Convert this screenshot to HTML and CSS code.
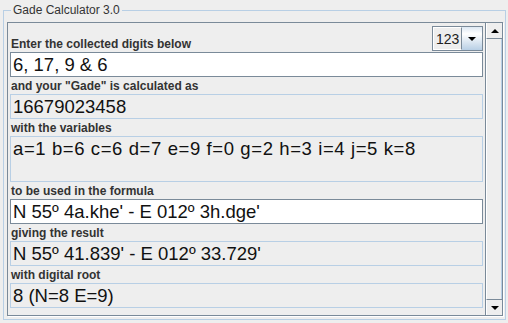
FILE: index.html
```html
<!DOCTYPE html>
<html lang="en">
<head>
    <meta charset="UTF-8">
    <title>Gade Calculator 3.0</title>
    <link rel="stylesheet" href="styles.css">
</head>
<body>
    <fieldset class="group">
        <legend>Gade Calculator 3.0</legend>
        <div class="scroll-pane">
            <div class="viewport">
                <div class="head-row">
                    <span class="label">Enter the collected digits below</span>
                    <div class="combo">
                        <span class="combo-value">123</span>
                        <span class="combo-arrow"><span class="tri-down"></span></span>
                    </div>
                </div>
                <div class="field editable">6, 17, 9 &amp; 6</div>

                <div class="label">and your "Gade" is calculated as</div>
                <div class="field">16679023458</div>

                <div class="label">with the variables</div>
                <div class="field area">a=1 b=6 c=6 d=7 e=9 f=0 g=2 h=3 i=4 j=5 k=8</div>

                <div class="label">to be used in the formula</div>
                <div class="field editable">N 55º 4a.khe' - E 012º 3h.dge'</div>

                <div class="label">giving the result</div>
                <div class="field">N 55º 41.839' - E 012º 33.729'</div>

                <div class="label">with digital root</div>
                <div class="field">8 (N=8 E=9)</div>
            </div>
            <!-- vertical scrollbar, no thumb since everything fits -->
            <div class="vbar">
                <div class="vbar-btn"><span class="tri-up"></span></div>
                <div class="vbar-track"></div>
                <div class="vbar-btn bottom"><span class="tri-down"></span></div>
            </div>
        </div>
    </fieldset>
</body>
</html>
```

FILE: styles.css
```css
body {
    margin: 0;
    padding: 3px 2px 0 3px;
    background-color: #eeeeee;
    font-family: "Liberation Sans", Arial, sans-serif;
    color: #333333;
}

.group {
    box-sizing: border-box;
    height: 317px;
    margin: 0;
    padding: 0 2px 4px 3px;
    border: 1px solid #b8cfe5;
    min-width: 0;
}

.group legend {
    margin-left: 4px;
    padding: 0 2px;
    font-size: 12px;
    line-height: 15px;
    color: #333333;
}

.scroll-pane {
    display: flex;
    height: 292px;
    margin-top: 4px;
    border: 1px solid #7a8a99;
    box-shadow: 1px 1px 0 #ffffff;
}

.viewport {
    flex: 1;
    padding: 3px 2px 0 2px;
}

.head-row {
    display: flex;
    justify-content: space-between;
    align-items: flex-end;
    height: 26px;
}

.label {
    display: block;
    height: 17px;
    line-height: 18px;
    font-size: 12px;
    font-weight: bold;
    padding-left: 1px;
    white-space: nowrap;
}

.head-row .label {
    height: auto;
    line-height: 15px;
}

.combo {
    display: flex;
    box-sizing: border-box;
    width: 51px;
    height: 25px;
    border: 1px solid #7a8a99;
    margin-bottom: 1px;
}

.combo-value {
    flex: 1;
    font-size: 14px;
    line-height: 23px;
    padding-left: 2px;
    color: #222222;
    background: #eeeeee;
    border: 1px solid #ffffff;
    border-right: 1px solid #7a8a99;
}

.combo-arrow {
    display: flex;
    align-items: center;
    justify-content: center;
    width: 20px;
    background: linear-gradient(#dde8f3, #ffffff 30%, #b8cfe5);
}

.tri-down, .tri-up {
    width: 0;
    height: 0;
    border-left: 4px solid transparent;
    border-right: 4px solid transparent;
}

.tri-down {
    border-top: 4px solid #000000;
}

.tri-up {
    border-bottom: 4px solid #000000;
}

.field {
    box-sizing: border-box;
    height: 25px;
    padding-left: 2px;
    border: 1px solid #b8cfe5;
    font-size: 18.5px;
    line-height: 23px;
    color: #111111;
    white-space: nowrap;
}

.field.editable {
    background: #ffffff;
    border-color: #7a8a99;
}

.field.area {
    height: 46px;
    line-height: 24px;
    letter-spacing: 0.6px;
}

.vbar {
    display: flex;
    flex-direction: column;
    box-sizing: border-box;
    width: 17px;
    border-left: 1px solid #7a8a99;
    background: #eeeeee;
}

.vbar-btn {
    display: flex;
    align-items: center;
    justify-content: center;
    height: 15px;
    border-bottom: 1px solid #7a8a99;
    border-left: 1px solid #ffffff;
}

.vbar-btn.bottom {
    border-bottom: none;
    border-top: 1px solid #7a8a99;
}

.vbar-track {
    flex: 1;
    border-left: 1px solid #ffffff;
    border-right: 1px solid #b8cfe5;
}
```
